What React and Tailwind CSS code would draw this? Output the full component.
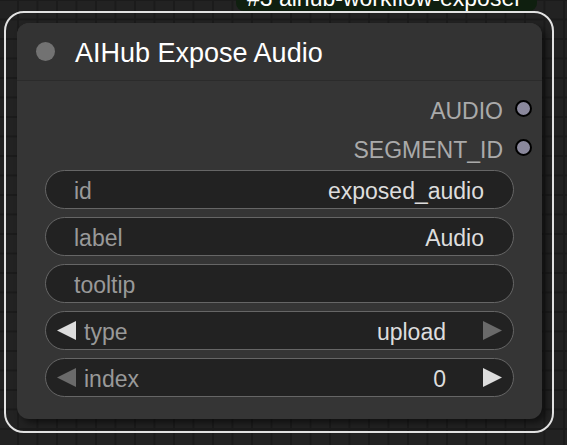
const outputs = ['AUDIO', 'SEGMENT_ID']

const widgets = [
  { kind: 'text', label: 'id', value: 'exposed_audio' },
  { kind: 'text', label: 'label', value: 'Audio' },
  { kind: 'text', label: 'tooltip', value: '' },
  { kind: 'combo', label: 'type', value: 'upload', leftOn: true, rightOn: false },
  { kind: 'combo', label: 'index', value: '0', leftOn: false, rightOn: true },
]

function Arrow({ dir, on }) {
  const points = dir === 'left' ? '19,0 19,19 0,9.5' : '0,0 0,19 19,9.5'
  return (
    <svg width="19" height="19" viewBox="0 0 19 19" className="shrink-0">
      <polygon points={points} fill={on ? '#dddddd' : '#6a6a6a'} />
    </svg>
  )
}

function Widget({ w }) {
  if (w.kind === 'text') {
    return (
      <div className="h-[39px] rounded-full border-[1.5px] border-[#666] bg-[#222] flex items-center justify-between pl-[28px] pr-[29px] text-[23px] leading-none">
        <span className="pt-[4px] text-[#999]">{w.label}</span>
        <span className="pt-[4px] text-[#ddd]">{w.value}</span>
      </div>
    )
  }
  return (
    <div className="h-[39px] rounded-full border-[1.5px] border-[#666] bg-[#222] flex items-center px-[11px] text-[23px] leading-none">
      <Arrow dir="left" on={w.leftOn} />
      <span className="pt-[4px] ml-[8px] flex-1 text-[#999]">{w.label}</span>
      <span className="pt-[4px] mr-[37px] text-[#ddd]">{w.value}</span>
      <Arrow dir="right" on={w.rightOn} />
    </div>
  )
}

function Node() {
  return (
    <div className="w-[525px] h-[396px] rounded-[12px] bg-[#353535] shadow-[4px_4px_6px_rgba(0,0,0,0.5)] flex flex-col overflow-hidden">
      <div className="h-[58px] bg-[#333] border-b border-[#2b2b2b] flex items-center pl-[19px]">
        <div className="w-[19px] h-[19px] rounded-full bg-[#727272]" />
        <span className="pt-[4px] ml-[20px] text-[27px] leading-none text-white whitespace-nowrap">AIHub Expose Audio</span>
      </div>
      <div className="pt-[8px] flex flex-col">
        {outputs.map(name => (
          <div key={name} className="h-[39px] flex items-center justify-end gap-[12px] pr-[10px] text-[23px] leading-none text-[#aaa]">
            <span className="pt-[5px]">{name}</span>
            <div className="w-[17px] h-[17px] rounded-full bg-[#8a889c] border-2 border-black" />
          </div>
        ))}
      </div>
      <div className="mt-[3px] px-[28px] flex flex-col gap-[8px]">
        {widgets.map(w => (
          <Widget key={w.label} w={w} />
        ))}
      </div>
    </div>
  )
}

export default function App() {
  return (
    <div className="relative w-[567px] h-[445px] overflow-hidden bg-[#222] bg-[linear-gradient(to_right,#1b1b1b_2px,transparent_2px),linear-gradient(to_bottom,#1b1b1b_2px,transparent_2px)] bg-[size:19.5px_19.5px] bg-[position:17px_-1px] pt-[11px] pl-[4px] font-['Liberation_Sans',Arial,sans-serif]">
      <div className="w-[550px] h-[422px] rounded-[20px] border-2 border-[#e2e2e2] pt-[10px] pl-[11px]">
        <Node />
      </div>
      <div className="absolute left-[236px] top-[-13px] w-[301px] h-[24px] rounded-b-[8px] bg-[#0f1f0f] pl-[11px] text-[23px] leading-[23px] text-white whitespace-nowrap">
        #3 aihub-workflow-exposer
      </div>
    </div>
  )
}
